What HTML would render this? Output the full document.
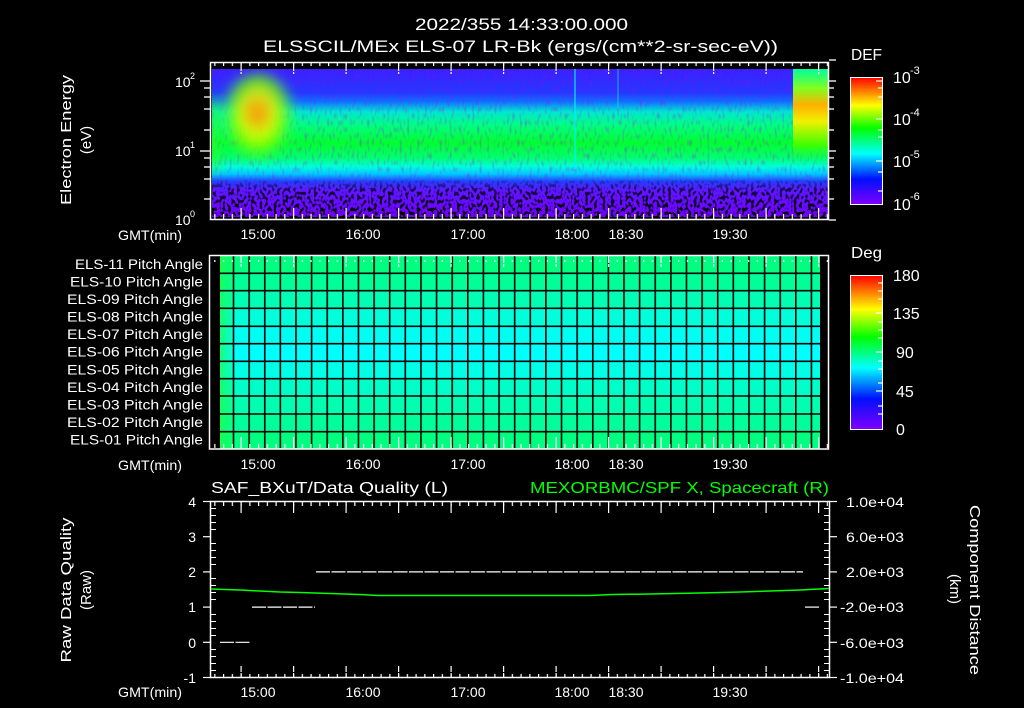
<!DOCTYPE html>
<html><head><meta charset="utf-8"><style>
html,body{margin:0;padding:0;background:#000;}
svg{display:block;}
text{font-family:"Liberation Sans",sans-serif;fill:#fff;}
</style></head><body>
<svg width="1024" height="708" viewBox="0 0 1024 708" xmlns="http://www.w3.org/2000/svg">
<defs>
<linearGradient id="spec" x1="0" y1="0" x2="0" y2="1">
<stop offset="0" stop-color="#3a20ff"/>
<stop offset="0.16" stop-color="#2438ff"/>
<stop offset="0.22" stop-color="#1070ff"/>
<stop offset="0.29" stop-color="#00e8d0"/>
<stop offset="0.38" stop-color="#00ff80"/>
<stop offset="0.5" stop-color="#00ff30"/>
<stop offset="0.6" stop-color="#00ff70"/>
<stop offset="0.66" stop-color="#00ffd8"/>
<stop offset="0.71" stop-color="#00c8ff"/>
<stop offset="0.76" stop-color="#2040ff"/>
<stop offset="0.82" stop-color="#5a18ff"/>
<stop offset="1" stop-color="#7000ff"/>
</linearGradient>
<radialGradient id="blob" cx="0.5" cy="0.4" r="0.5">
<stop offset="0" stop-color="#ff9000"/>
<stop offset="0.18" stop-color="#ffc000"/>
<stop offset="0.42" stop-color="#e0ff00"/>
<stop offset="0.7" stop-color="#50ff00" stop-opacity="0.85"/>
<stop offset="1" stop-color="#00ff60" stop-opacity="0"/>
</radialGradient>
<linearGradient id="rblk" x1="0" y1="0" x2="0" y2="1">
<stop offset="0" stop-color="#00ffa0"/>
<stop offset="0.2" stop-color="#80ff20"/>
<stop offset="0.38" stop-color="#ffb000"/>
<stop offset="0.55" stop-color="#f0f000"/>
<stop offset="0.8" stop-color="#40ff00"/>
<stop offset="1" stop-color="#00ff60" stop-opacity="0"/>
</linearGradient>
<linearGradient id="cbar" x1="0" y1="0" x2="0" y2="1">
<stop offset="0" stop-color="#ff0000"/>
<stop offset="0.22" stop-color="#ffff00"/>
<stop offset="0.4" stop-color="#00ff00"/>
<stop offset="0.6" stop-color="#00ffff"/>
<stop offset="0.8" stop-color="#0010ff"/>
<stop offset="1" stop-color="#8000ff"/>
</linearGradient>
<linearGradient id="botmask" x1="0" y1="0" x2="0" y2="1">
<stop offset="0" stop-color="#fff" stop-opacity="0"/>
<stop offset="0.74" stop-color="#fff" stop-opacity="0"/>
<stop offset="0.82" stop-color="#fff" stop-opacity="0.7"/>
<stop offset="1" stop-color="#fff" stop-opacity="1"/>
</linearGradient>
<mask id="bm"><rect x="212" y="69" width="616" height="148" fill="url(#botmask)"/></mask>
<filter id="speck" x="0" y="0" width="1" height="1">
<feTurbulence type="fractalNoise" baseFrequency="0.35 0.25" numOctaves="1" seed="4"/>
<feColorMatrix type="matrix" values="0 0 0 0 0  0 0 0 0 0  0 0 0 0 0  -10 0 0 0 5.0"/>
</filter>
<filter id="grain" x="0" y="0" width="1" height="1">
<feTurbulence type="fractalNoise" baseFrequency="0.4 0.15" numOctaves="1" seed="9"/>
<feColorMatrix type="matrix" values="0 0 0 0 0.4  0 0 0 0 0  0 0 0 0 1  -3 0 0 0 1.5"/>
</filter>
<filter id="blur" x="-50%" y="-50%" width="200%" height="200%"><feGaussianBlur stdDeviation="6"/></filter>
<clipPath id="specclip"><rect x="212" y="69" width="616" height="148"/></clipPath>
<pattern id="tk5" x="4.25" y="0" width="8.75" height="10" patternUnits="userSpaceOnUse"><rect x="0" y="0" width="1.2" height="6" fill="#fff"/></pattern>
<pattern id="tk5b" x="4.25" y="0" width="8.75" height="10" patternUnits="userSpaceOnUse"><rect x="0" y="4" width="1.2" height="6" fill="#fff"/></pattern>
<pattern id="tk30" x="30.5" y="0" width="52.5" height="12" patternUnits="userSpaceOnUse"><rect x="0" y="0" width="1.2" height="11" fill="#fff"/></pattern>
<pattern id="tk30b" x="30.5" y="0" width="52.5" height="12" patternUnits="userSpaceOnUse"><rect x="0" y="1" width="1.2" height="11" fill="#fff"/></pattern>
<pattern id="vgrid" x="232.7" y="0" width="15.62" height="10" patternUnits="userSpaceOnUse"><rect x="0" y="0" width="1.6" height="10" fill="#000"/></pattern>
<linearGradient id="leftfade" x1="0" y1="0" x2="1" y2="0">
<stop offset="0" stop-color="#20ff40" stop-opacity="0.7"/>
<stop offset="1" stop-color="#20ff40" stop-opacity="0"/>
</linearGradient>
</defs>

<text x="415" y="30" font-size="17" textLength="213" lengthAdjust="spacingAndGlyphs">2022/355 14:33:00.000</text>
<text x="263" y="52" font-size="17" textLength="515" lengthAdjust="spacingAndGlyphs">ELSSCIL/MEx ELS-07 LR-Bk  (ergs/(cm**2-sr-sec-eV))</text>

<rect x="212" y="69" width="616" height="148" fill="url(#spec)"/>
<rect x="212" y="69" width="616" height="148" filter="url(#grain)" opacity="0.35"/>
<g clip-path="url(#specclip)">
<rect x="206" y="100" width="14" height="70" fill="#30ff20" opacity="0.6" filter="url(#blur)"/>
<ellipse cx="258" cy="125" rx="40" ry="52" fill="url(#blob)" opacity="0.9" filter="url(#blur)"/>
<ellipse cx="256" cy="112" rx="12" ry="10" fill="#ff9a00" opacity="0.5" filter="url(#blur)"/>
</g>
<rect x="793" y="69" width="35" height="95" fill="url(#rblk)"/>
<rect x="574" y="69" width="2" height="100" fill="#00f0ff" opacity="0.6"/>
<rect x="617" y="69" width="2" height="40" fill="#00e0ff" opacity="0.4"/>
<g mask="url(#bm)"><rect x="212" y="69" width="616" height="148" filter="url(#speck)"/></g>
<rect x="210.5" y="62.5" width="618" height="157" fill="none" stroke="#fff" stroke-width="1.5"/>
<rect x="212" y="63" width="616" height="6" fill="url(#tk5)"/>
<rect x="212" y="63" width="616" height="11" fill="url(#tk30)"/>
<rect x="212" y="213" width="616" height="6" fill="url(#tk5b)"/>
<rect x="212" y="208" width="616" height="11" fill="url(#tk30b)"/>
<g stroke="#fff" stroke-width="1.3">
<line x1="200" y1="81" x2="210" y2="81"/><line x1="200" y1="151" x2="210" y2="151"/>
<line x1="204" y1="88" x2="210" y2="88"/><line x1="204" y1="97" x2="210" y2="97"/><line x1="204" y1="109" x2="210" y2="109"/><line x1="204" y1="130" x2="210" y2="130"/>
<line x1="204" y1="158" x2="210" y2="158"/><line x1="204" y1="167" x2="210" y2="167"/><line x1="204" y1="179" x2="210" y2="179"/><line x1="204" y1="199" x2="210" y2="199"/>
<line x1="829" y1="81" x2="836" y2="81"/><line x1="829" y1="151" x2="836" y2="151"/>
<line x1="829" y1="88" x2="834" y2="88"/><line x1="829" y1="97" x2="834" y2="97"/><line x1="829" y1="109" x2="834" y2="109"/><line x1="829" y1="130" x2="834" y2="130"/>
<line x1="829" y1="158" x2="834" y2="158"/><line x1="829" y1="167" x2="834" y2="167"/><line x1="829" y1="179" x2="834" y2="179"/><line x1="829" y1="199" x2="834" y2="199"/>
<line x1="829" y1="60" x2="836" y2="60"/><line x1="829" y1="220" x2="836" y2="220"/>
</g>
<text x="175" y="87" font-size="14">10</text><text x="190" y="79" font-size="9">2</text>
<text x="175" y="156" font-size="14">10</text><text x="190" y="148" font-size="9">1</text>
<text x="175" y="225" font-size="14">10</text><text x="190" y="217" font-size="9">0</text>
<text transform="translate(71,140) rotate(-90)" text-anchor="middle" font-size="15" textLength="130" lengthAdjust="spacingAndGlyphs">Electron Energy</text>
<text transform="translate(91,140) rotate(-90)" text-anchor="middle" font-size="15">(eV)</text>
<text x="118" y="240" font-size="14" textLength="64" lengthAdjust="spacingAndGlyphs">GMT(min)</text>
<g font-size="14" text-anchor="middle">
<text x="258" y="239">15:00</text><text x="363" y="239">16:00</text><text x="468" y="239">17:00</text>
<text x="572" y="239">18:00</text><text x="626" y="239">18:30</text><text x="730" y="239">19:30</text>
</g>

<text x="851" y="60" font-size="16" textLength="31" lengthAdjust="spacingAndGlyphs">DEF</text>
<rect x="850.5" y="77.5" width="32" height="127" fill="url(#cbar)" stroke="#fff" stroke-width="1"/>
<g stroke="#fff" stroke-width="1.2">
<line x1="876" y1="81" x2="882" y2="81"/><line x1="878" y1="88" x2="882" y2="88"/><line x1="878" y1="97" x2="882" y2="97"/><line x1="876" y1="119" x2="882" y2="119"/><line x1="878" y1="130" x2="882" y2="130"/><line x1="878" y1="137" x2="882" y2="137"/><line x1="876" y1="161" x2="882" y2="161"/><line x1="878" y1="172" x2="882" y2="172"/><line x1="878" y1="191" x2="882" y2="191"/>
</g>
<g font-size="16">
<text x="893" y="83">10</text><text x="910" y="74" font-size="11">-3</text>
<text x="893" y="125">10</text><text x="910" y="116" font-size="11">-4</text>
<text x="893" y="167">10</text><text x="910" y="158" font-size="11">-5</text>
<text x="893" y="210">10</text><text x="910" y="200" font-size="11">-6</text>
</g>

<rect x="220" y="256" width="600" height="17.5" fill="#00ff80"/>
<rect x="220" y="273.3" width="600" height="17.5" fill="#00ff98"/>
<rect x="220" y="290.7" width="600" height="17.6" fill="#00ffb4"/>
<rect x="220" y="308.3" width="600" height="18" fill="#00ffda"/>
<rect x="220" y="326.3" width="600" height="17.4" fill="#00fff2"/>
<rect x="220" y="343.7" width="600" height="17.6" fill="#00ffff"/>
<rect x="220" y="361.3" width="600" height="17.4" fill="#00ffe6"/>
<rect x="220" y="378.7" width="600" height="17.3" fill="#00ffc8"/>
<rect x="220" y="396" width="600" height="18" fill="#00ffb0"/>
<rect x="220" y="414" width="600" height="17.7" fill="#00ff9a"/>
<rect x="220" y="431.7" width="600" height="16.8" fill="#00ff80"/>
<rect x="220" y="256" width="16" height="192" fill="url(#leftfade)"/>
<rect x="220" y="256" width="600" height="192" fill="url(#vgrid)"/>
<g stroke="#000" stroke-width="1.6">
<line x1="220" y1="273.3" x2="820" y2="273.3"/><line x1="220" y1="290.7" x2="820" y2="290.7"/><line x1="220" y1="308.3" x2="820" y2="308.3"/><line x1="220" y1="326.3" x2="820" y2="326.3"/><line x1="220" y1="343.7" x2="820" y2="343.7"/><line x1="220" y1="361.3" x2="820" y2="361.3"/><line x1="220" y1="378.7" x2="820" y2="378.7"/><line x1="220" y1="396" x2="820" y2="396"/><line x1="220" y1="414" x2="820" y2="414"/><line x1="220" y1="431.7" x2="820" y2="431.7"/>
</g>
<rect x="209.5" y="255.5" width="619" height="193.5" fill="none" stroke="#fff" stroke-width="1.5"/>
<rect x="212" y="256" width="616" height="6" fill="url(#tk5)"/>
<rect x="212" y="256" width="616" height="11" fill="url(#tk30)"/>
<rect x="212" y="442" width="616" height="6" fill="url(#tk5b)"/>
<rect x="212" y="437" width="616" height="11" fill="url(#tk30b)"/>
<g font-size="13.5" text-anchor="end">
<text x="203" y="269" textLength="128" lengthAdjust="spacingAndGlyphs">ELS-11 Pitch Angle</text>
<text x="203" y="286.5" textLength="133" lengthAdjust="spacingAndGlyphs">ELS-10 Pitch Angle</text>
<text x="203" y="304" textLength="136" lengthAdjust="spacingAndGlyphs">ELS-09 Pitch Angle</text>
<text x="203" y="321.6" textLength="136" lengthAdjust="spacingAndGlyphs">ELS-08 Pitch Angle</text>
<text x="203" y="339.2" textLength="136" lengthAdjust="spacingAndGlyphs">ELS-07 Pitch Angle</text>
<text x="203" y="356.7" textLength="136" lengthAdjust="spacingAndGlyphs">ELS-06 Pitch Angle</text>
<text x="203" y="374.3" textLength="136" lengthAdjust="spacingAndGlyphs">ELS-05 Pitch Angle</text>
<text x="203" y="391.8" textLength="136" lengthAdjust="spacingAndGlyphs">ELS-04 Pitch Angle</text>
<text x="203" y="409.4" textLength="136" lengthAdjust="spacingAndGlyphs">ELS-03 Pitch Angle</text>
<text x="203" y="427" textLength="136" lengthAdjust="spacingAndGlyphs">ELS-02 Pitch Angle</text>
<text x="203" y="444.5" textLength="133" lengthAdjust="spacingAndGlyphs">ELS-01 Pitch Angle</text>
</g>
<text x="118" y="470" font-size="14" textLength="64" lengthAdjust="spacingAndGlyphs">GMT(min)</text>
<g font-size="14" text-anchor="middle">
<text x="258" y="469">15:00</text><text x="363" y="469">16:00</text><text x="468" y="469">17:00</text>
<text x="572" y="469">18:00</text><text x="626" y="469">18:30</text><text x="730" y="469">19:30</text>
</g>

<text x="851" y="258" font-size="16" textLength="31" lengthAdjust="spacingAndGlyphs">Deg</text>
<rect x="850.5" y="275.5" width="32" height="154" fill="url(#cbar)" stroke="#fff" stroke-width="1"/>
<g stroke="#fff" stroke-width="1.2">
<line x1="878" y1="283" x2="882" y2="283"/><line x1="878" y1="291" x2="882" y2="291"/><line x1="878" y1="299" x2="882" y2="299"/><line x1="876" y1="313" x2="882" y2="313"/><line x1="878" y1="322" x2="882" y2="322"/><line x1="878" y1="330" x2="882" y2="330"/><line x1="878" y1="338" x2="882" y2="338"/><line x1="876" y1="352" x2="882" y2="352"/><line x1="878" y1="361" x2="882" y2="361"/><line x1="878" y1="369" x2="882" y2="369"/><line x1="878" y1="383" x2="882" y2="383"/><line x1="876" y1="391" x2="882" y2="391"/><line x1="878" y1="406" x2="882" y2="406"/><line x1="878" y1="414" x2="882" y2="414"/>
</g>
<g font-size="16">
<text x="893" y="281">180</text><text x="893" y="319">135</text><text x="896" y="358">90</text><text x="896" y="397">45</text><text x="896" y="435">0</text>
</g>

<text x="211" y="493" font-size="16" textLength="237" lengthAdjust="spacingAndGlyphs">SAF_BXuT/Data Quality (L)</text>
<text x="530" y="493" font-size="16" style="fill:#00ff00" textLength="299" lengthAdjust="spacingAndGlyphs">MEXORBMC/SPF X, Spacecraft (R)</text>
<rect x="210.5" y="501.5" width="619" height="176" fill="none" stroke="#fff" stroke-width="1.5"/>
<rect x="212" y="502" width="616" height="6" fill="url(#tk5)"/>
<rect x="212" y="502" width="616" height="11" fill="url(#tk30)"/>
<rect x="212" y="671" width="616" height="6" fill="url(#tk5b)"/>
<rect x="212" y="666" width="616" height="11" fill="url(#tk30b)"/>
<g stroke="#fff" stroke-width="1.2">
<line x1="203" y1="501.5" x2="211" y2="501.5"/><line x1="203" y1="536.7" x2="211" y2="536.7"/><line x1="203" y1="571.9" x2="211" y2="571.9"/><line x1="203" y1="607.1" x2="211" y2="607.1"/><line x1="203" y1="642.3" x2="211" y2="642.3"/><line x1="203" y1="677.5" x2="211" y2="677.5"/>
<line x1="829" y1="501.5" x2="837" y2="501.5"/><line x1="829" y1="536.7" x2="837" y2="536.7"/><line x1="829" y1="571.9" x2="837" y2="571.9"/><line x1="829" y1="607.1" x2="837" y2="607.1"/><line x1="829" y1="642.3" x2="837" y2="642.3"/><line x1="829" y1="677.5" x2="837" y2="677.5"/>
</g>
<g stroke="#fff" stroke-width="1">
<path d="M211 508.5h5M211 515.5h5M211 522.5h5M211 529.5h5M211 543.5h5M211 550.5h5M211 557.5h5M211 564.5h5M211 578.5h5M211 585.5h5M211 592.5h5M211 599.5h5M211 614.5h5M211 621.5h5M211 628.5h5M211 635.5h5M211 649.5h5M211 656.5h5M211 663.5h5M211 670.5h5"/>
<path d="M824 508.5h5M824 515.5h5M824 522.5h5M824 529.5h5M824 543.5h5M824 550.5h5M824 557.5h5M824 564.5h5M824 578.5h5M824 585.5h5M824 592.5h5M824 599.5h5M824 614.5h5M824 621.5h5M824 628.5h5M824 635.5h5M824 649.5h5M824 656.5h5M824 663.5h5M824 670.5h5"/>
</g>
<g font-size="14" text-anchor="end">
<text x="196" y="507">4</text><text x="196" y="542">3</text><text x="196" y="577">2</text><text x="196" y="612">1</text><text x="196" y="648">0</text><text x="196" y="683">-1</text>
</g>
<g font-size="14">
<text x="846" y="507" textLength="58" lengthAdjust="spacingAndGlyphs">1.0e+04</text>
<text x="846" y="542" textLength="58" lengthAdjust="spacingAndGlyphs">6.0e+03</text>
<text x="846" y="577" textLength="58" lengthAdjust="spacingAndGlyphs">2.0e+03</text>
<text x="840" y="612" textLength="64" lengthAdjust="spacingAndGlyphs">-2.0e+03</text>
<text x="840" y="648" textLength="64" lengthAdjust="spacingAndGlyphs">-6.0e+03</text>
<text x="840" y="683" textLength="64" lengthAdjust="spacingAndGlyphs">-1.0e+04</text>
</g>
<text transform="translate(71,590) rotate(-90)" text-anchor="middle" font-size="15" textLength="145" lengthAdjust="spacingAndGlyphs">Raw Data Quality</text>
<text transform="translate(91,590) rotate(-90)" text-anchor="middle" font-size="15">(Raw)</text>
<text transform="translate(970,590) rotate(90)" text-anchor="middle" font-size="15" textLength="170" lengthAdjust="spacingAndGlyphs">Component Distance</text>
<text transform="translate(950,589) rotate(90)" text-anchor="middle" font-size="15">(km)</text>
<polyline fill="none" stroke="#00ff00" stroke-width="1.5" points="211,589 240,590 260,591 280,592 300,592.5 330,593.5 360,594.5 378,595.5 460,595.5 590,595.5 612,594.5 650,594 700,593 740,592 770,591 800,590 829,588.5"/>
<g stroke="#fff" stroke-width="1.2" stroke-dasharray="14 1.5">
<line x1="316" y1="571.9" x2="803" y2="571.9"/>
<line x1="252" y1="607.1" x2="315" y2="607.1"/>
<line x1="220" y1="642.3" x2="250" y2="642.3"/>
<line x1="805" y1="607.1" x2="819" y2="607.1"/>
</g>
<text x="118" y="697" font-size="14" textLength="64" lengthAdjust="spacingAndGlyphs">GMT(min)</text>
<g font-size="14" text-anchor="middle">
<text x="258" y="697">15:00</text><text x="363" y="697">16:00</text><text x="468" y="697">17:00</text>
<text x="572" y="697">18:00</text><text x="626" y="697">18:30</text><text x="730" y="697">19:30</text>
</g>
</svg>
</body></html>
